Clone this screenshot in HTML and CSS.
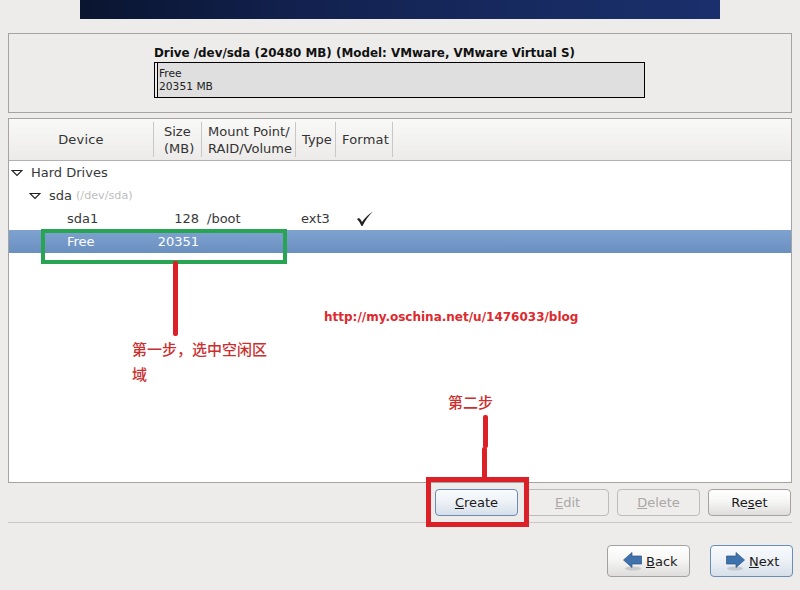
FILE: index.html
```html
<!DOCTYPE html>
<html lang="en">
<head>
<meta charset="utf-8">
<title>Partitioning</title>
<link rel="stylesheet" href="styles.css">
</head>
<body>
<div class="page">
  <div class="banner"></div>
  <section class="drive-panel">
    <div class="drive-title">Drive /dev/sda (20480 MB) (Model: VMware, VMware Virtual S)</div>
    <div class="drive-bar">
      <div class="sda1-slice"></div>
      <div class="free-slice">
        <div>Free</div>
        <div>20351 MB</div>
      </div>
    </div>
  </section>
  <section class="tree-panel">
    <div class="thead">
      <div class="th th-device">Device</div>
      <div class="th th-size">Size<br>(MB)</div>
      <div class="th th-mount">Mount Point/<br>RAID/Volume</div>
      <div class="th th-type">Type</div>
      <div class="th th-format">Format</div>
      <div class="th-fill"></div>
    </div>
    <div class="row">
      <svg class="expander ex-1" viewBox="0 0 12 8"><path d="M1 1.5h10L6 6.5z"/></svg>
      <span>Hard Drives</span>
    </div>
    <div class="row">
      <svg class="expander ex-2" viewBox="0 0 12 8"><path d="M1 1.5h10L6 6.5z"/></svg>
      <span>sda</span><span class="muted">(/dev/sda)</span>
    </div>
    <div class="row leaf">
      <span class="c-name">sda1</span><span class="c-size">128</span><span class="c-mount">/boot</span><span class="c-type">ext3</span>
      <svg class="check" viewBox="0 0 18 18"><path d="M1 9 3 8Q5 9.5 6 12 10 6 17 1.5 11 7 6.5 16H5.5Q4 12 1 9z"/></svg>
    </div>
    <div class="row leaf selected">
      <span class="c-name">Free</span><span class="c-size">20351</span>
    </div>
  </section>
  <div class="actions">
    <button class="btn focus"><u>C</u>reate</button>
    <button class="btn off"><u>E</u>dit</button>
    <button class="btn off"><u>D</u>elete</button>
    <button class="btn">Re<u>s</u>et</button>
  </div>
  <div class="sep"></div>
  <div class="nav">
    <button class="btn nav-btn">
      <svg class="nav-ico" viewBox="0 0 19 20"><ellipse class="shade" cx="10" cy="17.5" rx="8" ry="2"/><path class="arrow" d="M.5 9 9 1.5V5h9.5v8H9v3.5z"/></svg>
      <span><u>B</u>ack</span>
    </button>
    <button class="btn nav-btn focus">
      <svg class="nav-ico" viewBox="0 0 19 20"><ellipse class="shade" cx="9" cy="17.5" rx="8" ry="2"/><path class="arrow" d="M18.5 9 10 1.5V5H.5v8H10v3.5z"/></svg>
      <span><u>N</u>ext</span>
    </button>
  </div>

  <div class="mark green-box"></div>
  <div class="mark red-line line-1"></div>
  <div class="note note-1">第一步，选中空闲区<br>域</div>
  <div class="note url">http://my.oschina.net/u/1476033/blog</div>
  <div class="note note-2">第二步</div>
  <div class="mark red-line line-2a"></div>
  <div class="mark red-line line-2b"></div>
  <div class="mark red-box"></div>
</div>
</body>
</html>
```
FILE: styles.css
```css
* { box-sizing: border-box; }
html, body { margin: 0; padding: 0; }
body {
  width: 800px;
  height: 590px;
  overflow: hidden;
  background: #edeceb;
  font-family: "DejaVu Sans", sans-serif;
  font-size: 13px;
  color: #2e2e2e;
}
.page {
  position: relative;
  width: 800px;
  height: 590px;
  padding: 0 8px;
}
.banner {
  width: 640px;
  height: 19px;
  margin: 0 0 14px 72px;
  background: linear-gradient(90deg, #0a1530 0%, #12214f 35%, #172a60 70%, #1a2f6c 100%);
}
.drive-panel {
  height: 80px;
  border: 1px solid #a5a4a2;
  padding: 12px 0 0 145px;
}
.drive-title {
  font-size: 11.9px;
  font-weight: 700;
  line-height: 15px;
  color: #111;
  white-space: nowrap;
}
.drive-bar {
  display: flex;
  width: 491px;
  height: 36px;
  margin-top: 1px;
  border: 1px solid #000;
  background: #dfdfdf;
}
.sda1-slice {
  width: 2px;
  background: #edeceb;
}
.free-slice {
  flex: 1;
  padding: 4px 0 0 1px;
  border-left: 1px solid #000;
  font-size: 10.7px;
  line-height: 13px;
  color: #222;
}
.tree-panel {
  height: 365px;
  margin-top: 5px;
  border: 1px solid #a5a4a2;
  background: #fff;
}
.thead {
  display: flex;
  height: 42px;
  border-bottom: 1px solid #b2b1af;
  background: linear-gradient(#f9f9f8, #ecebe9);
}
.th {
  display: flex;
  align-items: center;
  height: 35px;
  margin-top: 3px;
  border-right: 1px solid #c9c8c6;
  font-size: 13px;
  line-height: 17px;
  white-space: nowrap;
  color: #333;
}
.th-device { width: 145px; justify-content: center; letter-spacing: 0.2px; }
.th-size { width: 48px; padding-left: 10px; }
.th-mount { width: 94px; padding-left: 6px; }
.th-type { width: 40px; padding-left: 6px; }
.th-format { width: 57px; padding-left: 6px; letter-spacing: 0.2px; }
.th-fill { flex: 1; }
.row {
  position: relative;
  display: flex;
  align-items: center;
  height: 23px;
  white-space: nowrap;
  color: #383838;
}
.expander {
  width: 12px;
  height: 8px;
  fill: #fff;
  stroke: #222;
  stroke-width: 1.2;
}
.ex-1 { margin: 0 8px 0 2px; }
.ex-2 { margin: 0 8px 0 20px; }
.muted { margin-left: 4px; font-size: 11.2px; color: #bdbdbd; }
.leaf { padding-left: 58px; }
.c-name { width: 80px; }
.c-size { width: 52px; text-align: right; }
.c-mount { width: 102px; padding-left: 8px; }
.c-type { width: 40px; }
.check { width: 18px; height: 18px; margin-left: 15px; fill: #222; }
.selected {
  background: linear-gradient(#7fa2d0, #6a90c0);
  color: #fff;
}
.actions {
  display: flex;
  justify-content: flex-end;
  gap: 8px;
  height: 27px;
  margin-top: 6px;
  padding-right: 1px;
}
.btn {
  display: inline-flex;
  align-items: center;
  justify-content: center;
  width: 83px;
  height: 27px;
  padding: 0;
  border: 1px solid #a3a2a0;
  border-radius: 4px;
  background: linear-gradient(#ffffff, #f6f6f5 45%, #dedddb);
  font-family: "DejaVu Sans", sans-serif;
  font-size: 13px;
  color: #1a1a1a;
}
.focus {
  border-color: #6b8db5;
  background: linear-gradient(#f8fafc, #eef2f7 45%, #d6dfe9);
}
.off {
  border-color: #bdbcba;
  background: #eeedec;
  color: #a9a8a7;
}
.sep {
  height: 1px;
  margin-top: 6px;
  background: #c9c8c6;
}
.nav {
  display: flex;
  justify-content: flex-end;
  gap: 20px;
  margin: 22px -1px 0 0;
}
.nav-btn {
  height: 32px;
  gap: 4px;
  justify-content: flex-start;
  padding: 0 0 0 15px;
}
.nav-ico { width: 19px; height: 20px; }
.arrow { fill: #3f72ac; stroke: #2a5488; stroke-width: 0.7; }
.shade { fill: #b9bcc0; opacity: 0.7; }
.mark { position: absolute; }
.green-box {
  left: 41px;
  top: 229px;
  width: 246px;
  height: 35px;
  border: 4px solid #27a552;
}
.red-line { background: #dc2027; border-radius: 2px; width: 5px; }
.line-1 { left: 173px; top: 261px; height: 75px; }
.line-2a { left: 483px; top: 415px; height: 33px; }
.line-2b { left: 482px; top: 447px; height: 32px; }
.red-box {
  left: 426px;
  top: 477px;
  width: 103px;
  height: 50px;
  border: 5px solid #dc2027;
}
.note {
  position: absolute;
  font-family: "Noto Sans CJK SC", sans-serif;
  font-size: 15px;
  font-weight: 500;
  color: #c9302f;
  white-space: nowrap;
}
.note-1 { left: 132px; top: 336px; width: 140px; line-height: 25px; }
.note-2 { left: 448px; top: 392px; line-height: 20px; }
.url {
  left: 324px;
  top: 308px;
  font-family: "DejaVu Sans", sans-serif;
  font-size: 12px;
  font-weight: 700;
  line-height: 18px;
  color: #dc2a2e;
}
```
